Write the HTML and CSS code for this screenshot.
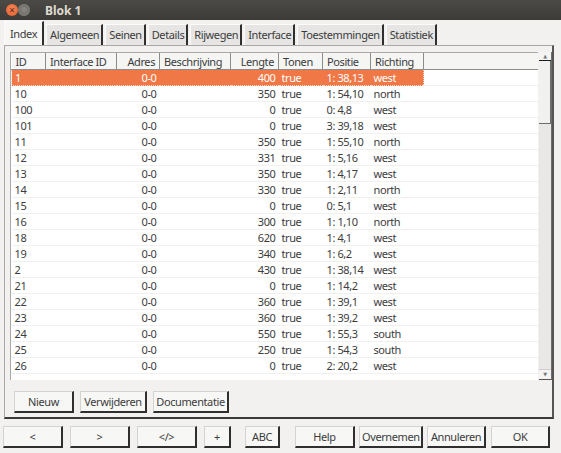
FILE: index.html
```html
<!DOCTYPE html>
<html lang="nl">
<head>
    <meta charset="UTF-8">
    <title>Blok 1</title>
    <link rel="stylesheet" href="styles.css">
</head>
<body>
    <div class="window">
        <div class="titlebar">
            <span class="wbtn close">&#215;</span>
            <span class="wbtn minimize"></span>
            <span class="title">Blok 1</span>
        </div>

        <div class="tabs">
            <div class="tab active">Index</div>
            <div class="tab">Algemeen</div>
            <div class="tab">Seinen</div>
            <div class="tab">Details</div>
            <div class="tab">Rijwegen</div>
            <div class="tab">Interface</div>
            <div class="tab">Toestemmingen</div>
            <div class="tab">Statistiek</div>
        </div>

        <div class="panel">
            <div class="table-box">
                <div class="table-view">
                    <table class="grid">
                        <colgroup>
                            <col class="c-id"><col class="c-iface"><col class="c-adres"><col class="c-besch">
                            <col class="c-lengte"><col class="c-tonen"><col class="c-pos"><col class="c-richt"><col>
                        </colgroup>
                        <thead>
                            <tr>
                                <th>ID</th>
                                <th>Interface ID</th>
                                <th class="num">Adres</th>
                                <th>Beschrijving</th>
                                <th class="num">Lengte</th>
                                <th>Tonen</th>
                                <th>Positie</th>
                                <th>Richting</th>
                                <th class="filler"></th>
                            </tr>
                        </thead>
                        <tbody>
                            <tr class="selected"><td>1</td><td></td><td class="num">0-0</td><td></td><td class="num">400</td><td>true</td><td class="pos">1: 38,13</td><td>west</td><td class="filler"></td></tr>
                            <tr><td>10</td><td></td><td class="num">0-0</td><td></td><td class="num">350</td><td>true</td><td class="pos">1: 54,10</td><td>north</td><td></td></tr>
                            <tr><td>100</td><td></td><td class="num">0-0</td><td></td><td class="num">0</td><td>true</td><td class="pos">0: 4,8</td><td>west</td><td></td></tr>
                            <tr><td>101</td><td></td><td class="num">0-0</td><td></td><td class="num">0</td><td>true</td><td class="pos">3: 39,18</td><td>west</td><td></td></tr>
                            <tr><td>11</td><td></td><td class="num">0-0</td><td></td><td class="num">350</td><td>true</td><td class="pos">1: 55,10</td><td>north</td><td></td></tr>
                            <tr><td>12</td><td></td><td class="num">0-0</td><td></td><td class="num">331</td><td>true</td><td class="pos">1: 5,16</td><td>west</td><td></td></tr>
                            <tr><td>13</td><td></td><td class="num">0-0</td><td></td><td class="num">350</td><td>true</td><td class="pos">1: 4,17</td><td>west</td><td></td></tr>
                            <tr><td>14</td><td></td><td class="num">0-0</td><td></td><td class="num">330</td><td>true</td><td class="pos">1: 2,11</td><td>north</td><td></td></tr>
                            <tr><td>15</td><td></td><td class="num">0-0</td><td></td><td class="num">0</td><td>true</td><td class="pos">0: 5,1</td><td>west</td><td></td></tr>
                            <tr><td>16</td><td></td><td class="num">0-0</td><td></td><td class="num">300</td><td>true</td><td class="pos">1: 1,10</td><td>north</td><td></td></tr>
                            <tr><td>18</td><td></td><td class="num">0-0</td><td></td><td class="num">620</td><td>true</td><td class="pos">1: 4,1</td><td>west</td><td></td></tr>
                            <tr><td>19</td><td></td><td class="num">0-0</td><td></td><td class="num">340</td><td>true</td><td class="pos">1: 6,2</td><td>west</td><td></td></tr>
                            <tr><td>2</td><td></td><td class="num">0-0</td><td></td><td class="num">430</td><td>true</td><td class="pos">1: 38,14</td><td>west</td><td></td></tr>
                            <tr><td>21</td><td></td><td class="num">0-0</td><td></td><td class="num">0</td><td>true</td><td class="pos">1: 14,2</td><td>west</td><td></td></tr>
                            <tr><td>22</td><td></td><td class="num">0-0</td><td></td><td class="num">360</td><td>true</td><td class="pos">1: 39,1</td><td>west</td><td></td></tr>
                            <tr><td>23</td><td></td><td class="num">0-0</td><td></td><td class="num">360</td><td>true</td><td class="pos">1: 39,2</td><td>west</td><td></td></tr>
                            <tr><td>24</td><td></td><td class="num">0-0</td><td></td><td class="num">550</td><td>true</td><td class="pos">1: 55,3</td><td>south</td><td></td></tr>
                            <tr><td>25</td><td></td><td class="num">0-0</td><td></td><td class="num">250</td><td>true</td><td class="pos">1: 54,3</td><td>south</td><td></td></tr>
                            <tr><td>26</td><td></td><td class="num">0-0</td><td></td><td class="num">0</td><td>true</td><td class="pos">2: 20,2</td><td>west</td><td></td></tr>
                        </tbody>
                    </table>
                </div>
                <div class="scrollbar">
                    <div class="sb-arrow up">&#9650;</div>
                    <div class="sb-thumb"></div>
                    <div class="sb-track"></div>
                    <div class="sb-arrow down">&#9660;</div>
                </div>
            </div>

            <div class="panel-buttons">
                <button class="btn w-nieuw">Nieuw</button>
                <button class="btn w-verw">Verwijderen</button>
                <button class="btn w-doc">Documentatie</button>
            </div>
        </div>

        <div class="footer">
            <button class="btn w-nav">&lt;</button>
            <button class="btn w-nav">&gt;</button>
            <button class="btn w-nav">&lt;/&gt;</button>
            <button class="btn w-plus">+</button>
            <button class="btn w-abc">ABC</button>
            <button class="btn w-help">Help</button>
            <button class="btn w-over">Overnemen</button>
            <button class="btn w-annul">Annuleren</button>
            <button class="btn w-ok">OK</button>
        </div>
    </div>
</body>
</html>
```

FILE: styles.css
```css
body {
    margin: 0;
    background: #f2f1f0;
    font-family: "Noto Sans", "DejaVu Sans", sans-serif;
    font-size: 11px;
    letter-spacing: -0.4px;
    color: #3c3c3c;
}

.window {
    width: 561px;
    height: 453px;
    overflow: hidden;
}

/* title bar */
.titlebar {
    height: 20px;
    background: linear-gradient(#4b4a46, #3c3b37);
    display: flex;
    align-items: center;
    padding-left: 6px;
}

.wbtn {
    width: 12px;
    height: 12px;
    border-radius: 50%;
    font-size: 10px;
    line-height: 12px;
    text-align: center;
    color: #5a2a14;
    letter-spacing: 0;
}

.wbtn.close {
    background: radial-gradient(circle at 50% 40%, #f6875a, #e45d2a);
}

.wbtn.minimize {
    background: radial-gradient(circle at 50% 40%, #8a8883, #6a6964);
    box-shadow: inset 0 0 0 3px #787671;
}

.title {
    margin-left: 15px;
    font-weight: bold;
    font-size: 12px;
    letter-spacing: 0;
    color: #dfdbd2;
}

/* tabs */
.tabs {
    display: flex;
    align-items: flex-end;
    height: 25px;
    padding-left: 4px;
}

.tab {
    height: 20px;
    line-height: 20px;
    padding: 0 2px 0 3px;
    margin-right: 2px;
    background: #e6e5e3;
    border-left: 1px solid #fbfbfb;
    border-right: 2px solid #2f2f2f;
    border-top: 1px solid #fbfbfb;
}

.tab.active {
    height: 23px;
    line-height: 24px;
    background: #f6f6f5;
    padding: 0 5px;
}

/* tab panel */
.panel {
    margin-left: 4px;
    width: 550px;
    height: 374px;
    border-top: 1px solid #a8a8a6;
    border-left: 1px solid #a8a8a6;
    border-right: 2px solid #555553;
    border-bottom: 2px solid #3a3a38;
    padding: 6px 0 0 5px;
    box-sizing: border-box;
}

.table-box {
    display: flex;
    height: 328px;
    width: 542px;
}

.table-view {
    width: 530px;
    background: #ffffff;
    border-left: 1px solid #a8a8a6;
    border-top: 1px solid #a8a8a6;
    box-sizing: border-box;
    overflow: hidden;
}

.grid {
    border-collapse: collapse;
    table-layout: fixed;
    width: 529px;
}

.c-id { width: 34px; }
.c-iface { width: 71px; }
.c-adres { width: 43px; }
.c-besch { width: 71px; }
.c-lengte { width: 48px; }
.c-tonen { width: 44px; }
.c-pos { width: 48px; }
.c-richt { width: 53px; }

.grid th {
    height: 16px;
    font-weight: normal;
    text-align: left;
    padding: 0 4px;
    background: #f5f5f4;
    border-right: 1px solid #8c8c8a;
    border-bottom: 1px solid #8c8c8a;
    white-space: nowrap;
    overflow: hidden;
}

.grid td {
    height: 15px;
    padding: 0 3px;
    border-bottom: 1px solid #f0f0f0;
    white-space: nowrap;
    line-height: 15px;
}

.grid .num {
    text-align: right;
}

.grid td.pos {
    padding-left: 4px;
}

.grid tr.selected td {
    background: #f07746;
    color: #ffffff;
    border-top: 1px dotted #ffd9c6;
    border-bottom: 1px dotted #ffd9c6;
}

.grid tr.selected td:first-child {
    border-left: 1px dotted #ffd9c6;
}

.grid tr.selected td:nth-child(8) {
    border-right: 1px dotted #ffd9c6;
}

.grid tr.selected td.filler {
    background: #ffffff;
    border: none;
    border-bottom: 1px solid #f0f0f0;
}

/* scrollbar */
.scrollbar {
    width: 12px;
    margin-left: 1px;
    display: flex;
    flex-direction: column;
    background: #e9e8e6;
    border-right: 1px solid #6d6d6b;
}

.sb-arrow {
    height: 8px;
    font-size: 5px;
    line-height: 8px;
    text-align: center;
    color: #777;
    background: #f4f4f3;
}

.sb-arrow.up {
    border-bottom: 1px solid #1e1e1e;
}

.sb-arrow.down {
    border-top: 1px solid #cfcfcd;
    border-bottom: 1px solid #555;
    height: 9px;
}

.sb-thumb {
    height: 62px;
    background: #f1f1f0;
    border-right: 1px solid #6d6d6b;
    border-bottom: 1px solid #6d6d6b;
}

.sb-track {
    flex: 1;
}

/* buttons */
.btn {
    font-family: inherit;
    font-size: 11px;
    letter-spacing: -0.4px;
    color: #3c3c3c;
    height: 22px;
    padding: 0 2px;
    background: #f7f7f6;
    border: 1px solid #d3d3d1;
    border-right: 2px solid #2f2f2f;
    border-bottom: 2px solid #2f2f2f;
    border-radius: 0;
    white-space: nowrap;
}

.panel-buttons {
    display: flex;
    gap: 6px;
    padding: 11px 0 0 4px;
}

.w-nieuw { width: 60px; }
.w-verw { width: 67px; }
.w-doc { width: 76px; }

.footer {
    display: flex;
    padding: 7px 0 0 3px;
}

.footer .btn {
    margin-right: 7px;
}

.w-nav { width: 60px; }
.w-plus { width: 27px; margin-right: 14px !important; }
.w-abc { width: 35px; margin-right: 15px !important; }
.w-help { width: 60px; margin-right: 4px !important; }
.w-over { width: 64px; margin-right: 4px !important; }
.w-annul { width: 59px; margin-right: 5px !important; }
.w-ok { width: 59px; }
```
